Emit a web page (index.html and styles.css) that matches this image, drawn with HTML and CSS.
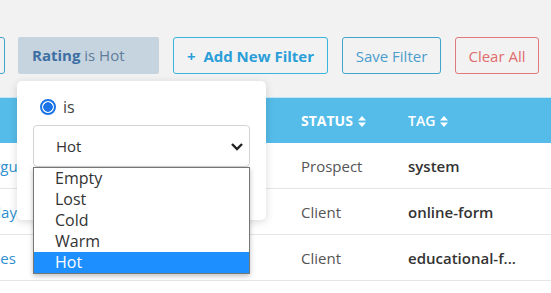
FILE: index.html
```html
<html>

<head>
    <meta charset="UTF-8">
    <title>Contacts - Filter</title>
    <link rel="stylesheet" href="styles.css">
</head>

<body>
    <div class="toolbar">
        <button class="btn btn_edge" type="button"></button>
        <div class="chip"><b>Rating</b> is Hot</div>
        <button class="btn btn_add" type="button">+&nbsp;&nbsp;Add New Filter</button>
        <button class="btn btn_save" type="button">Save Filter</button>
        <button class="btn btn_clear" type="button">Clear All</button>
    </div>

    <div class="table">
        <div class="row head">
            <div class="cell name"></div>
            <div class="cell status">STATUS
                <svg class="sort" width="8" height="11" viewBox="0 0 8 11"><path d="M4 0 L8 4.5 L0 4.5 Z M0 6.5 L8 6.5 L4 11 Z" fill="#fff"/></svg>
            </div>
            <div class="cell tag">TAG
                <svg class="sort" width="8" height="11" viewBox="0 0 8 11"><path d="M4 0 L8 4.5 L0 4.5 Z M0 6.5 L8 6.5 L4 11 Z" fill="#fff"/></svg>
            </div>
        </div>
        <div class="row">
            <div class="cell name"><a href="#">Ferguson</a></div>
            <div class="cell status">Prospect</div>
            <div class="cell tag">system</div>
        </div>
        <div class="row">
            <div class="cell name"><a href="#">Delay</a></div>
            <div class="cell status">Client</div>
            <div class="cell tag">online-form</div>
        </div>
        <div class="row">
            <div class="cell name"><a href="#">Jones</a></div>
            <div class="cell status">Client</div>
            <div class="cell tag">educational-f...</div>
        </div>
    </div>

    <!-- filter popup -->
    <div class="popup">
        <label class="radio_line"><span class="radio"></span>is</label>
        <div class="fake_select">
            <span>Hot</span>
            <svg width="14" height="9" viewBox="0 0 14 9"><path d="M2 2 L7 7 L12 2" fill="none" stroke="#222" stroke-width="2.4"/></svg>
        </div>
    </div>
    <ul class="options">
        <li>Empty</li>
        <li>Lost</li>
        <li>Cold</li>
        <li>Warm</li>
        <li class="picked">Hot</li>
    </ul>
</body>

</html>
```

FILE: styles.css
```css
body {
    margin: 0;
    font-family: "Open Sans", sans-serif;
    background-color: #fff;
    overflow: hidden;
}

.toolbar {
    display: flex;
    gap: 14px;
    background-color: #f2f2f2;
    padding: 37px 0 24px 0;
}

.btn {
    flex-shrink: 0;
    height: 37px;
    background: transparent;
    border: 1px solid #3fa5cd;
    border-radius: 3px;
    padding: 0;
    font-family: "Open Sans", sans-serif;
    font-size: 15px;
    white-space: nowrap;
    text-align: center;
}

.btn_edge {
    width: 70px;
    margin-left: -65px;
}

.chip {
    flex-shrink: 0;
    width: 141px;
    height: 37px;
    box-sizing: border-box;
    margin-left: -1px;
    padding-left: 14px;
    line-height: 37px;
    background-color: #c6d4e0;
    border-radius: 2px;
    font-size: 15px;
    color: #5f7d9b;
    white-space: nowrap;
}

.chip b {
    color: #3d6fa3;
    font-weight: 700;
}

.btn_add {
    width: 155px;
    border-color: #39b4dc;
    color: #2a9ed8;
    font-weight: 700;
}

.btn_save {
    width: 99px;
    color: #4c9dcc;
}

.btn_clear {
    width: 84px;
    border-color: #e07a7a;
    color: #e06c6c;
}

.table {
    border-top: 1px solid #c4e6f5;
    margin-top: -1px;
}

.row {
    display: flex;
    height: 45px;
    align-items: center;
    border-bottom: 1px solid #e6e6e6;
    font-size: 15px;
}

.row.head {
    background-color: #55bce9;
    border-bottom: none;
    color: #fff;
    font-weight: 700;
    font-size: 14px;
}

.cell.name {
    flex-shrink: 0;
    width: 323px;
    margin-left: -22px;
}

.cell.name a {
    color: #2f8fcf;
    text-decoration: none;
}

.cell.status {
    flex-shrink: 0;
    width: 107px;
    color: #555;
}

.head .cell.status,
.head .cell.tag {
    color: #fff;
}

.cell.tag {
    color: #333;
    font-weight: 600;
    white-space: nowrap;
}

.sort {
    vertical-align: -1px;
    margin-left: 1px;
}

.popup {
    position: absolute;
    left: 17px;
    top: 81px;
    width: 249px;
    height: 139px;
    box-sizing: border-box;
    padding: 18px 16px 0 16px;
    background-color: #fff;
    border-radius: 5px;
    box-shadow: 0 2px 8px rgba(0, 0, 0, .15);
}

.radio_line {
    display: flex;
    align-items: center;
    gap: 7px;
    padding-left: 7px;
    font-size: 16px;
    color: #444;
    height: 16px;
}

.radio {
    width: 12px;
    height: 12px;
    border: 2px solid #1b75e6;
    border-radius: 50%;
    background: radial-gradient(circle, #1b75e6 0 4.5px, #fff 5px);
}

.fake_select {
    display: flex;
    justify-content: space-between;
    align-items: center;
    margin-top: 10px;
    height: 42px;
    box-sizing: border-box;
    padding: 0 5px 0 22px;
    border: 1px solid #d4d4d4;
    border-radius: 4px;
    font-size: 15px;
    color: #333;
}

.options {
    position: absolute;
    left: 33px;
    top: 167px;
    width: 217px;
    margin: 0;
    padding: 0;
    list-style: none;
    box-sizing: border-box;
    border: 1px solid #767676;
    background-color: #fff;
    box-shadow: 0 2px 5px rgba(0, 0, 0, .25);
}

.options li {
    height: 21px;
    line-height: 21px;
    padding-left: 21px;
    font-size: 16px;
    color: #333;
}

.options li.picked {
    background-color: #1e8fff;
    color: #fff;
}
```
